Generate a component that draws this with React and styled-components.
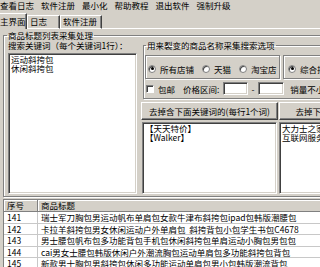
import React from 'react';
import styled, { createGlobalStyle } from 'styled-components';

const GlobalStyle = createGlobalStyle`
  html, body {
    margin: 0;
    padding: 0;
    overflow: hidden;
    background: #d4d0c8;
  }
  body {
    font-family: "Noto Sans CJK SC", "Noto Sans", sans-serif;
    font-size: 8.5px;
    color: #000;
  }
`;

const GREY = '#d4d0c8';

const Window = styled.div`
  width: 430px;
  height: 267px;
  overflow: hidden;
  background: ${GREY};
`;

const MenuBar = styled.div`
  display: flex;
  height: 13px;
  margin-left: -3.5px;
`;

const MenuItem = styled.span`
  padding: 0 3.5px;
  line-height: 11px;
  white-space: nowrap;
`;

const TabStrip = styled.div`
  display: flex;
  align-items: flex-end;
  height: 16px;
`;

const Tab = styled.div`
  box-sizing: border-box;
  flex: none;
  width: ${p => p.$w}px;
  height: ${p => (p.$active ? 16 : 14)}px;
  margin-left: ${p => p.$ml || 0}px;
  padding: ${p => (p.$active ? '2px 0 0 2px' : '0 0 2px 2px')};
  line-height: 10px;
  border-top: 1px solid #fff;
  border-left: 1px solid #fff;
  border-right: 1px solid #404040;
  border-bottom: ${p => (p.$active ? 'none' : '1px solid #fff')};
  box-shadow: inset -1px 0 0 #808080;
  white-space: nowrap;
`;

const TabFiller = styled.div`
  flex: 1;
  border-bottom: 1px solid #fff;
`;

const Panel = styled.div`
  padding-top: 1px;
`;

const GroupBox = styled.fieldset`
  margin: ${p => p.$margin || '0'};
  padding: ${p => p.$padding || '0'};
  border: 1px solid #808080;
  box-shadow: inset 1px 1px 0 #fff, 1px 1px 0 #fff;
  min-width: 0;
`;

const Legend = styled.legend`
  margin-left: ${p => p.$ml || 0}px;
  padding: 0 1px;
  line-height: 10px;
  white-space: nowrap;
`;

const Columns = styled.div`
  display: flex;
  gap: 4px;
`;

const LeftColumn = styled.div`
  width: 129px;
  flex: none;
`;

const RightColumn = styled.div`
  width: 276px;
  flex: none;
`;

const Label = styled.div`
  line-height: 10px;
  white-space: nowrap;
`;

const TextBox = styled.div`
  box-sizing: border-box;
  height: ${p => p.$h}px;
  margin: ${p => p.$margin || '0'};
  padding: 1px 2px;
  background: #fff;
  border: 1px solid;
  border-color: #808080 #fff #fff #808080;
  box-shadow: inset 1px 1px 0 #404040, inset -1px -1px 0 ${GREY};
  line-height: 8.5px;
  white-space: pre;
  overflow: hidden;
`;

const RadioRow = styled.div`
  display: flex;
  gap: 3px;
  margin-top: 5px;
`;

const OptionBox = styled.div`
  box-sizing: border-box;
  display: flex;
  align-items: center;
  gap: 8px;
  width: ${p => (p.$w ? `${p.$w}px` : 'auto')};
  flex: ${p => (p.$w ? 'none' : '1')};
  height: 24px;
  padding: 3px 0 0 1px;
  border: 1px solid #808080;
  box-shadow: inset 1px 1px 0 #fff, 1px 1px 0 #fff;
  white-space: nowrap;
`;

const Choice = styled.label`
  display: flex;
  align-items: center;
  gap: 4px;
  line-height: 10px;
  margin-left: ${p => p.$ml || 0}px;
`;

const RadioDot = styled.span`
  box-sizing: border-box;
  width: 8px;
  height: 8px;
  border-radius: 50%;
  background: #fff;
  border: 1px solid #808080;
  box-shadow: inset 1px 1px 0 #404040;
  display: flex;
  align-items: center;
  justify-content: center;
  &::after {
    content: '';
    width: 3px;
    height: 3px;
    border-radius: 50%;
    background: ${p => (p.$checked ? '#000' : 'transparent')};
  }
`;

const CheckSquare = styled.span`
  box-sizing: border-box;
  width: 8px;
  height: 8px;
  background: #fff;
  border: 1px solid;
  border-color: #808080 #fff #fff #808080;
  box-shadow: inset 1px 1px 0 #404040;
`;

const FilterRow = styled.div`
  display: flex;
  align-items: center;
  gap: 4px;
  height: 13px;
  margin-top: 3px;
  white-space: nowrap;
`;

const Input = styled.span`
  box-sizing: border-box;
  width: ${p => p.$w}px;
  height: 13px;
  background: #fff;
  border: 1px solid;
  border-color: #808080 #fff #fff #808080;
  box-shadow: inset 1px 1px 0 #404040, inset -1px -1px 0 ${GREY};
  flex: none;
`;

const Spaced = styled.span`
  margin-left: ${p => p.$ml || 0}px;
  line-height: 10px;
`;

const PairGrid = styled.div`
  display: grid;
  grid-template-columns: 137px 137px;
  gap: 1px;
  margin-top: ${p => p.$mt || 0}px;
`;

const Button = styled.div`
  box-sizing: border-box;
  height: 18px;
  line-height: 16px;
  text-align: center;
  white-space: nowrap;
  overflow: hidden;
  border: 1px solid;
  border-color: #fff #404040 #404040 #fff;
  box-shadow: inset -1px -1px 0 #808080;
`;

const Table = styled.div`
  margin: 2px 0 0 3px;
  border-left: 1px solid #808080;
  border-top: 1px solid #808080;
  background: #fff;
`;

const HeaderRow = styled.div`
  display: grid;
  grid-template-columns: 34px 1fr;
  height: 12px;
  background: ${GREY};
`;

const HeaderCell = styled.div`
  box-sizing: border-box;
  padding-left: 3px;
  line-height: 11px;
  border-right: 1px solid #808080;
  border-bottom: 1px solid #808080;
  box-shadow: inset 1px 1px 0 #fff;
`;

const Row = styled.div`
  display: grid;
  grid-template-columns: 34px 1fr;
  height: 11.5px;
`;

const Cell = styled.div`
  box-sizing: border-box;
  padding-left: 3px;
  line-height: 11px;
  white-space: pre;
  overflow: hidden;
  border-right: 1px solid #c8c8c8;
  border-bottom: 1px solid #c8c8c8;
`;

const menus = ['查看日志', '软件注册', '最小化', '帮助教程', '退出软件', '强制升级'];

const rows = [
  ['141', '瑞士军刀胸包男运动帆布单肩包女款牛津布斜挎包ipad包韩版潮腰包'],
  ['142', '卡拉羊斜挎包男女休闲运动户外单肩包  斜挎背包小包学生书包C4678'],
  ['143', '男士腰包帆布包多功能背包手机包休闲斜挎包单肩运动小胸包男包包'],
  ['144', 'cai男女士腰包韩版休闲户外潮流胸包运动单肩包多功能斜挎包背包'],
  ['145', '新款男士胸包男斜挎包休闲多功能运动单肩包男小包韩版潮流背包'],
];

export default function App() {
  return (
    <Window>
      <GlobalStyle />
      <MenuBar>
        {menus.map(m => <MenuItem key={m}>{m}</MenuItem>)}
      </MenuBar>
      <TabStrip>
        <Tab $active $w={30} $ml={-3}>主界面</Tab>
        <Tab $w={33}>日志</Tab>
        <Tab $w={42}>软件注册</Tab>
        <TabFiller />
      </TabStrip>
      <Panel>
        <GroupBox $margin="0 0 0 3px" $padding="0 4px 2px 4px">
          <Legend $ml={-1}>商品标题列表采集处理</Legend>
          <Columns>
            <LeftColumn>
              <Label>搜索关键词（每个关键词1行）：</Label>
              <TextBox $h={141} $margin="3px 0 0 0">{'运动斜挎包\n休闲斜挎包'}</TextBox>
            </LeftColumn>
            <RightColumn>
              <GroupBox $margin="0 0 0 2px" $padding="0 1px 3px 1px">
                <Legend $ml={1}>用来裂变的商品名称采集搜索选项</Legend>
                <RadioRow>
                  <OptionBox $w={135}>
                    <Choice $ml={1}><RadioDot $checked />所有店铺</Choice>
                    <Choice><RadioDot />天猫</Choice>
                    <Choice><RadioDot />淘宝店</Choice>
                  </OptionBox>
                  <OptionBox>
                    <Choice $ml={3}><RadioDot $checked />综合排序</Choice>
                  </OptionBox>
                </RadioRow>
                <FilterRow>
                  <Choice $ml={1}><CheckSquare />包邮</Choice>
                  <Spaced $ml={4}>价格区间:</Spaced>
                  <Input $w={25} />
                  <Spaced $ml={-1}>-</Spaced>
                  <Input $w={26} />
                  <Spaced $ml={2}>销量不小于</Spaced>
                </FilterRow>
              </GroupBox>
              <PairGrid $mt={3}>
                <Button>去掉含下面关键词的(每行1个词)</Button>
                <Button>去掉下面的店铺(每行1个词)</Button>
              </PairGrid>
              <PairGrid $mt={2}>
                <TextBox $h={72} $margin="0 1px">{'【天天特价】\n【Walker】'}</TextBox>
                <TextBox $h={72}>{'大力士之家旗舰店\n互联网服务商'}</TextBox>
              </PairGrid>
            </RightColumn>
          </Columns>
        </GroupBox>
        <Table>
          <HeaderRow>
            <HeaderCell>序号</HeaderCell>
            <HeaderCell>商品标题</HeaderCell>
          </HeaderRow>
          {rows.map(([n, t]) => (
            <Row key={n}>
              <Cell>{n}</Cell>
              <Cell>{t}</Cell>
            </Row>
          ))}
        </Table>
      </Panel>
    </Window>
  );
}
